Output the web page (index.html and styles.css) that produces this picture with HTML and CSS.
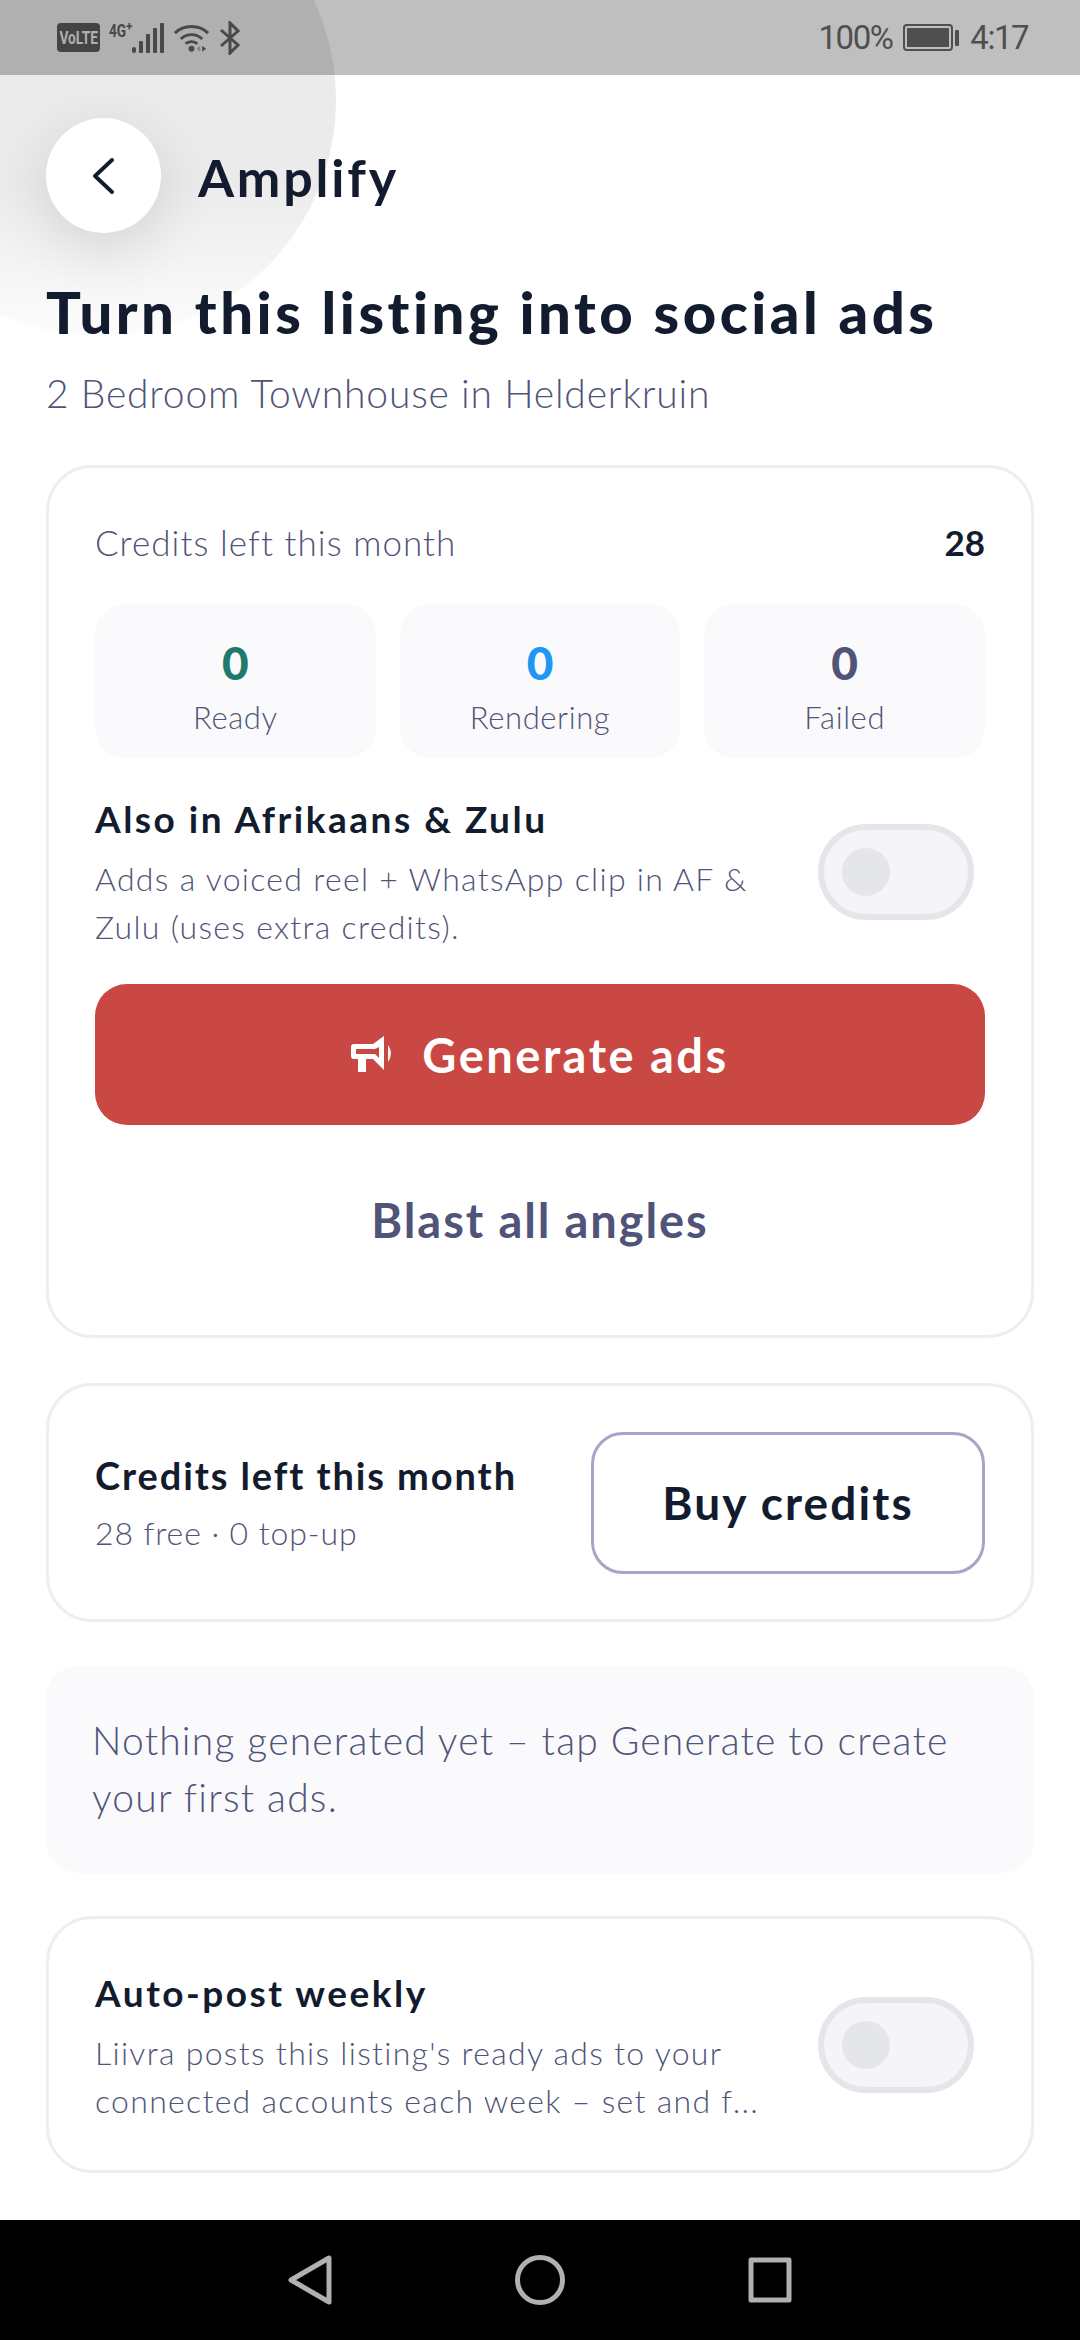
FILE: index.html
```html
<!DOCTYPE html>
<html>
<head>
    <meta charset="UTF-8">
    <title>Amplify</title>
    <link rel="stylesheet" href="styles.css">
</head>
<body>
<div class="phone">
    <div class="statusbar">
        <div class="status-left">
            <span class="volte"><span class="volte-label">VoLTE</span></span>
            <div class="net">
                <span class="net-label">4G</span>
                <span class="net-plus">+</span>
                <svg width="32" height="30" viewBox="0 0 32 30" fill="#4f4f4f">
                    <rect x="0" y="24" width="4" height="6" rx="2"/>
                    <rect x="7" y="18" width="4" height="12" rx="1"/>
                    <rect x="14" y="11" width="4" height="19" rx="1"/>
                    <rect x="21" y="5" width="4" height="25" rx="1"/>
                    <rect x="28" y="0" width="4" height="30" rx="1"/>
                </svg>
            </div>
            <svg class="wifi" width="37" height="32" viewBox="0 0 38 32" fill="none" stroke="#4f4f4f" stroke-width="3">
                <path d="M2 11C11 2 27 2 36 11"/>
                <path d="M8 17C14 11 24 11 30 17"/>
                <path d="M13 22C16 19 22 19 25 22"/>
                <circle cx="19" cy="27" r="3" fill="#4f4f4f" stroke="none"/>
                <path d="M24 27l4-3v6z" fill="#8f8f8f" stroke="none"/>
                <path d="M30 24v6l4-3z" fill="#4f4f4f" stroke="none"/>
            </svg>
            <svg class="bt" width="22" height="34" viewBox="0 0 22 34" fill="none" stroke="#4f4f4f" stroke-width="3">
                <path d="M2 9L19 24L11 32V2L19 10L2 25"/>
            </svg>
        </div>
        <div class="status-right">
            <span>100%</span>
            <span class="battery"><span class="battery-fill"></span></span>
            <span class="battery-tip"></span>
            <span class="clock">4:17</span>
        </div>
    </div>

    <div class="ripple"></div>

    <main class="content">
        <header class="topbar">
            <button class="back">
                <svg width="21" height="36" viewBox="0 0 21 36" fill="none" stroke="#131c2e" stroke-width="3.8" stroke-linecap="round" stroke-linejoin="round">
                    <path d="M19 2L2 18L19 34"/>
                </svg>
            </button>
            <span class="topbar-title">Amplify</span>
        </header>

        <h1 class="page-title">Turn this listing into social ads</h1>
        <p class="page-sub">2 Bedroom Townhouse in Helderkruin</p>

        <section class="card card-main">
            <div class="credits-row">
                <span class="credits-label">Credits left this month</span>
                <span class="credits-num">28</span>
            </div>
            <div class="stats">
                <div class="stat"><b class="stat-num green">0</b><span class="stat-label">Ready</span></div>
                <div class="stat"><b class="stat-num blue">0</b><span class="stat-label">Rendering</span></div>
                <div class="stat"><b class="stat-num slate">0</b><span class="stat-label">Failed</span></div>
            </div>
            <div class="option">
                <div class="option-text">
                    <h3>Also in Afrikaans &amp; Zulu</h3>
                    <p>Adds a voiced reel + WhatsApp clip in AF &amp; Zulu (uses extra credits).</p>
                </div>
                <div class="switch"><span class="knob"></span></div>
            </div>
            <button class="btn-generate">
                <svg width="43" height="37" viewBox="0 0 43 37" fill="#fff">
                    <path d="M3 8H22L33 0V34L22 23H15V36H7V23H3Q0 23 0 20V11Q0 8 3 8ZM5 13V18H24L28 22V11L24 13Z" fill-rule="evenodd"/>
                    <path d="M37 9Q43 17 37 26Z"/>
                </svg>
                <span>Generate ads</span>
            </button>
            <div class="blast">Blast all angles</div>
        </section>

        <section class="card card-buy">
            <div class="buy-text">
                <h3>Credits left this month</h3>
                <p>28 free · 0 top-up</p>
            </div>
            <button class="btn-buy">Buy credits</button>
        </section>

        <section class="empty-note">Nothing generated yet – tap Generate to create your first ads.</section>

        <section class="card card-auto">
            <div class="option-text">
                <h3>Auto-post weekly</h3>
                <p>Liivra posts this listing's ready ads to your connected accounts each week – set and f...</p>
            </div>
            <div class="switch"><span class="knob"></span></div>
        </section>
    </main>

    <nav class="navbar">
        <svg width="44" height="50" viewBox="0 0 44 50" fill="none" stroke="#b0b0b0" stroke-width="5" stroke-linejoin="round"><path d="M3 25L41 3V47Z"/></svg>
        <svg width="50" height="50" viewBox="0 0 50 50" fill="none" stroke="#b0b0b0" stroke-width="5"><circle cx="25" cy="25" r="22.5"/></svg>
        <svg width="44" height="46" viewBox="0 0 44 46" fill="none" stroke="#b0b0b0" stroke-width="5" stroke-linejoin="round"><rect x="3" y="3" width="38" height="40"/></svg>
    </nav>
</div>
</body>
</html>
```
FILE: styles.css
```css
* {
    box-sizing: border-box;
}

html, body {
    margin: 0;
    padding: 0;
}

body {
    font-family: "Lato", "Liberation Sans", sans-serif;
    color: #131c2e;
    background: #fff;
}

button {
    font-family: inherit;
    border: none;
    padding: 0;
}

h1, h3, p {
    margin: 0;
}

.phone {
    position: relative;
    width: 1080px;
    height: 2340px;
    display: flex;
    flex-direction: column;
    overflow: hidden;
}

/* status bar */
.statusbar {
    height: 75px;
    flex: none;
    background: #bfbfbf;
    display: flex;
    justify-content: space-between;
    align-items: center;
    padding: 0 52px 0 57px;
    color: #4f4f4f;
    font-family: "Roboto", sans-serif;
    font-size: 33px;
    letter-spacing: -1.5px;
}

.status-left, .status-right {
    display: flex;
    align-items: center;
}

.status-left {
    gap: 9px;
    letter-spacing: 0;
}

.volte {
    width: 43px;
    height: 29px;
    border-radius: 4px;
    background: #4a4a4a;
    color: #bfbfbf;
    display: flex;
    align-items: center;
    justify-content: center;
}

.volte-label {
    font-size: 19px;
    font-weight: 700;
    line-height: 20px;
    white-space: nowrap;
    transform: scaleX(0.72);
}

.net {
    display: flex;
    align-items: flex-end;
    height: 30px;
}

.net-label {
    align-self: flex-start;
    width: 24px;
    margin-right: -7px;
    font-size: 19px;
    font-weight: 700;
    line-height: 15px;
    transform: scaleX(0.72);
    transform-origin: left top;
}

.net-plus {
    align-self: flex-start;
    width: 8px;
    font-size: 12px;
    font-weight: 700;
    line-height: 9px;
    margin-right: -2px;
}

.battery {
    width: 50px;
    height: 27px;
    margin-left: 11px;
    border: 2px solid #4f4f4f;
    border-radius: 4px;
    padding: 2px;
    display: flex;
}

.battery-fill {
    flex: 1;
    background: #4f4f4f;
}

.battery-tip {
    width: 4px;
    height: 16px;
    margin-left: 2px;
    background: #4f4f4f;
    border-radius: 1px;
}

.clock {
    margin-left: 11px;
}

/* tap highlight left over the back button */
.ripple {
    position: absolute;
    left: -136px;
    top: -136px;
    width: 472px;
    height: 472px;
    border-radius: 50%;
    background: linear-gradient(rgba(0, 0, 0, 0.08) 68%, rgba(0, 0, 0, 0.012) 100%);
    pointer-events: none;
}

.content {
    flex: 1;
    padding: 43px 46px 0;
    display: flex;
    flex-direction: column;
    background: #fff;
}

.topbar {
    display: flex;
    align-items: center;
    gap: 37px;
    height: 115px;
}

.back {
    width: 115px;
    height: 115px;
    border-radius: 50%;
    background: #fff;
    box-shadow: 0 16px 60px rgba(0, 0, 0, 0.12);
    display: flex;
    align-items: center;
    justify-content: center;
    position: relative;
}

.topbar-title {
    font-size: 52px;
    font-weight: 700;
    letter-spacing: 2.8px;
    position: relative;
    top: 1px;
}

.page-title {
    position: relative;
    font-size: 58px;
    font-weight: 900;
    letter-spacing: 3.5px;
    line-height: 68px;
    margin-top: 45px;
}

.page-sub {
    font-size: 39px;
    font-weight: 300;
    color: #4f5478;
    line-height: 46px;
    letter-spacing: 0.8px;
    margin-top: 24px;
}

.card {
    border: 3px solid #eeeef2;
    border-radius: 46px;
    background: #fff;
}

.card-main {
    margin-top: 49px;
    height: 873px;
    padding: 54px 46px 0;
    display: flex;
    flex-direction: column;
}

.credits-row {
    display: flex;
    justify-content: space-between;
    align-items: center;
    height: 40px;
}

.credits-label {
    font-size: 35px;
    font-weight: 300;
    color: #4f5478;
    letter-spacing: 1.05px;
}

.credits-num {
    font-size: 35px;
    font-weight: 700;
}

.stats {
    display: flex;
    gap: 24px;
    margin-top: 42px;
}

.stat {
    flex: 1;
    height: 154px;
    border-radius: 30px;
    background: #fafafc;
    display: flex;
    flex-direction: column;
    align-items: center;
    padding-top: 35px;
}

.stat-num {
    font-size: 46px;
    line-height: 48px;
    font-weight: 900;
}

.green { color: #1f7a6d; }
.blue { color: #2196f3; }
.slate { color: #4f5478; }

.stat-label {
    font-size: 31px;
    font-weight: 300;
    color: #4f5478;
    line-height: 36px;
    margin-top: 12px;
    letter-spacing: 0.6px;
}

.option {
    display: flex;
    justify-content: space-between;
    align-items: center;
    margin-top: 39px;
}

.option-text h3 {
    font-size: 37px;
    font-weight: 700;
    line-height: 44px;
    letter-spacing: 2.5px;
}

.option-text p {
    font-size: 32px;
    font-weight: 300;
    color: #4f5478;
    line-height: 48px;
    letter-spacing: 1.3px;
    margin-top: 14px;
    width: 680px;
}

.option .switch {
    margin-bottom: 5px;
}

.switch {
    width: 156px;
    height: 96px;
    flex: none;
    margin-right: 11px;
    border: 6px solid #e5e6ea;
    border-radius: 48px;
    background: #f4f4f9;
    display: flex;
    align-items: center;
    padding-left: 18px;
}

.knob {
    width: 48px;
    height: 48px;
    border-radius: 50%;
    background: #e5e6ea;
}

.btn-generate {
    height: 141px;
    margin-top: 33px;
    border-radius: 32px;
    background: #c94843;
    color: #fff;
    display: flex;
    align-items: center;
    justify-content: center;
    gap: 28px;
    font-size: 47px;
    font-weight: 700;
    letter-spacing: 2.5px;
}

.blast {
    text-align: center;
    font-size: 47px;
    font-weight: 700;
    color: #4f5478;
    letter-spacing: 1.9px;
    margin-top: 68px;
    line-height: 54px;
}

.card-buy {
    margin-top: 45px;
    height: 239px;
    padding: 0 46px;
    display: flex;
    align-items: center;
    justify-content: space-between;
}

.buy-text h3 {
    font-size: 38px;
    font-weight: 700;
    letter-spacing: 1.9px;
    line-height: 44px;
}

.buy-text p {
    font-size: 32px;
    font-weight: 300;
    color: #4f5478;
    letter-spacing: 0.9px;
    line-height: 38px;
    margin-top: 17px;
}

.btn-buy {
    width: 394px;
    height: 142px;
    border: 3px solid #a3a6c6;
    border-radius: 32px;
    background: #fff;
    color: #131c2e;
    font-size: 46px;
    font-weight: 700;
    letter-spacing: 2.1px;
}

.empty-note {
    margin-top: 44px;
    height: 207px;
    padding: 46px 46px 0;
    border-radius: 32px;
    background: #fafafc;
    font-size: 39px;
    font-weight: 300;
    color: #4f5478;
    line-height: 57px;
    letter-spacing: 1.2px;
}

.card-auto {
    margin-top: 43px;
    height: 257px;
    padding: 0 46px;
    display: flex;
    align-items: center;
    justify-content: space-between;
}

.card-auto .option-text {
    margin-top: 6px;
}

.navbar {
    flex: none;
    height: 120px;
    background: #000;
    display: flex;
    align-items: center;
    justify-content: center;
    gap: 183px;
}
```
